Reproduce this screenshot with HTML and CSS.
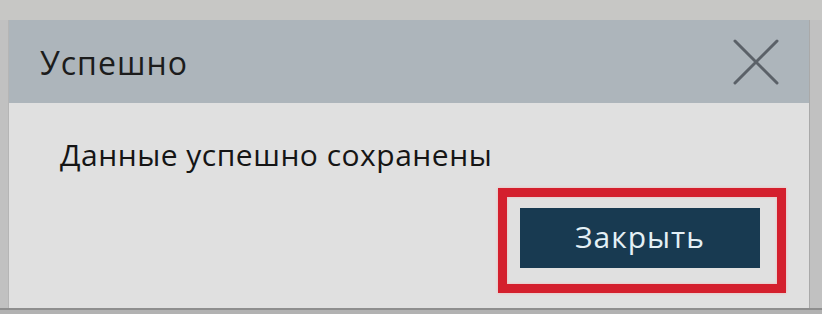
FILE: index.html
```html
<!DOCTYPE html>
<html lang="ru">
<head>
<meta charset="utf-8">
<title>Успешно</title>
<link rel="stylesheet" href="styles.css">
</head>
<body>
<div class="page">
  <div class="modal">
    <div class="modal-header">
      <h2 class="modal-title">Успешно</h2>
      <button class="close" aria-label="Закрыть">
        <svg width="46" height="46" viewBox="0 0 46 46"><path d="M2 2 L44 44 M44 2 L2 44" stroke="#5b6168" stroke-width="3" stroke-linecap="round" fill="none"/></svg>
      </button>
    </div>
    <div class="modal-body">
      <p class="message">Данные успешно сохранены</p>
      <div class="footer">
        <div class="btn-wrap">
          <button class="btn">Закрыть</button>
          <span class="highlight"></span>
        </div>
      </div>
    </div>
  </div>
  <div class="under"></div>
</div>
</body>
</html>
```

FILE: styles.css
```css
html, body {
  margin: 0;
  padding: 0;
}
body {
  background: #c3c3c2;
  font-family: "Open Sans", "DejaVu Sans", sans-serif;
  width: 822px;
  height: 314px;
  overflow: hidden;
}
.page {
  position: relative;
  padding: 20px 0 0 9px;
  background: linear-gradient(#c7c7c5 0, #c7c7c5 20px, #c1c1c1 20px);
  height: 294px;
}
.modal {
  width: 800px;
  height: 288px;
  background: #e0e0e0;
  box-shadow: 1px 0 0 #a9a9a9, -1px 0 0 #b5b5b5;
  position: relative;
  z-index: 1;
}
.modal-header {
  height: 83px;
  background: #adb5bb;
  display: flex;
  align-items: center;
  justify-content: space-between;
  padding: 0 30px 0 31px;
}
.modal-title {
  margin: 0;
  font-size: 32px;
  font-weight: 400;
  letter-spacing: 1px;
  color: #1c1c1c;
  line-height: 1;
  padding-top: 3px;
}
.close {
  background: none;
  border: 0;
  padding: 0;
  width: 46px;
  height: 46px;
  display: flex;
}
.modal-body {
  padding: 0 49px 0 51px;
}
.message {
  margin: 0;
  padding-top: 31px;
  font-size: 30px;
  letter-spacing: 0.5px;
  line-height: 41px;
  color: #151515;
}
.footer {
  display: flex;
  justify-content: flex-end;
  margin-top: 33px;
}
.btn-wrap {
  position: relative;
}
.btn {
  display: block;
  width: 240px;
  height: 60px;
  border: 0;
  background: #183a51;
  color: #e4f0f6;
  font-family: "Open Sans", "DejaVu Sans", sans-serif;
  font-size: 30px;
  letter-spacing: 1px;
  padding: 0 0 4px;
}
.highlight {
  position: absolute;
  top: -20px;
  left: -22px;
  right: -26px;
  bottom: -25px;
  border: 9px solid #d41f2d;
  box-shadow: 0 0 3px #f2b5b5, inset 0 0 3px #f2b5b5;
}
.under {
  position: absolute;
  left: 0;
  right: 0;
  top: 308px;
  height: 6px;
  background: #b2b2b2;
  border-top: 2px solid #8e8e8e;
}
```
